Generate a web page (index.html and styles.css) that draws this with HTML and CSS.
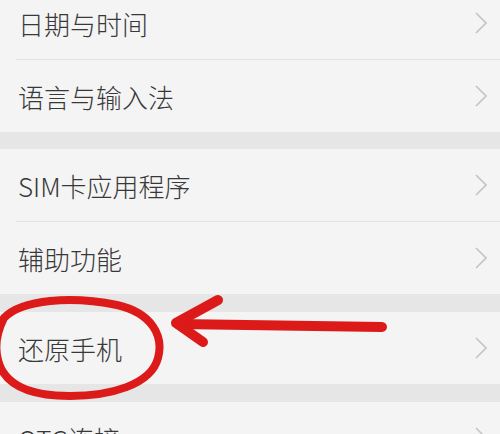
FILE: index.html
```html
<!DOCTYPE html>
<html lang="zh">
<head>
<meta charset="utf-8">
<link rel="stylesheet" href="styles.css">
</head>
<body>
<div class="screen">
  <div class="list">
    <div class="group">
      <div class="row"><span class="label">日期与时间</span><svg class="chev" viewBox="0 0 12 22"><polyline points="1,1 11,11 1,21"/></svg></div>
      <div class="divider"></div>
      <div class="row"><span class="label">语言与输入法</span><svg class="chev" viewBox="0 0 12 22"><polyline points="1,1 11,11 1,21"/></svg></div>
    </div>
    <div class="gap"></div>
    <div class="group">
      <div class="row"><span class="label">SIM卡应用程序</span><svg class="chev" viewBox="0 0 12 22"><polyline points="1,1 11,11 1,21"/></svg></div>
      <div class="divider"></div>
      <div class="row"><span class="label">辅助功能</span><svg class="chev" viewBox="0 0 12 22"><polyline points="1,1 11,11 1,21"/></svg></div>
    </div>
    <div class="gap gap-b"></div>
    <div class="group">
      <div class="row"><span class="label">还原手机</span><svg class="chev" viewBox="0 0 12 22"><polyline points="1,1 11,11 1,21"/></svg></div>
    </div>
    <div class="gap gap-b"></div>
    <div class="group">
      <div class="row"><span class="label">OTG连接</span><svg class="chev" viewBox="0 0 12 22"><polyline points="1,1 11,11 1,21"/></svg></div>
    </div>
  </div>
  <svg class="marks" viewBox="0 0 500 434" width="500" height="434">
    <path class="ink" d="M 4 318 C 22 299, 72 296, 117 305 C 152 313, 164 336, 158 358 C 151 385, 110 396, 70 396 C 30 396, 4 385, -2 360 C -6 345, -2 330, 4 318"/>
    <path class="ink thick" d="M 382 327 L 178 324"/>
    <path class="ink thick" d="M 218 300 L 176 323 L 203 342"/>
  </svg>
</div>
</body>
</html>
```
FILE: styles.css
```css
html, body {
  margin: 0;
  padding: 0;
}
body {
  width: 500px;
  height: 434px;
  overflow: hidden;
  background: #f4f4f4;
  font-family: "Noto Sans CJK SC", "Noto Sans", sans-serif;
}
.screen {
  position: relative;
  width: 500px;
  height: 434px;
  overflow: hidden;
}
.list {
  margin-top: -13px;
  display: flex;
  flex-direction: column;
}
.group {
  background: #f4f4f4;
  display: flex;
  flex-direction: column;
}
.row {
  height: 72px;
  display: flex;
  align-items: center;
  justify-content: space-between;
  padding: 0 13px 0 18px;
}
.label {
  font-size: 26px;
  font-weight: 300;
  color: #383838;
  line-height: 1;
  padding-top: 2px;
}
.chev {
  width: 12px;
  height: 22px;
  fill: none;
  stroke: #c4c4c4;
  stroke-width: 1.6;
}
.divider {
  height: 1px;
  margin-left: 16px;
  background: #e2e2e2;
}
.gap {
  height: 17px;
  background: #e6e6e6;
}
.gap-b {
  height: 18px;
}
.marks {
  position: absolute;
  left: 0;
  top: 0;
  pointer-events: none;
}
.ink {
  fill: none;
  stroke: #dc1a1a;
  stroke-width: 8;
  stroke-linecap: round;
  stroke-linejoin: round;
}
.thick {
  stroke-width: 10;
}
```
